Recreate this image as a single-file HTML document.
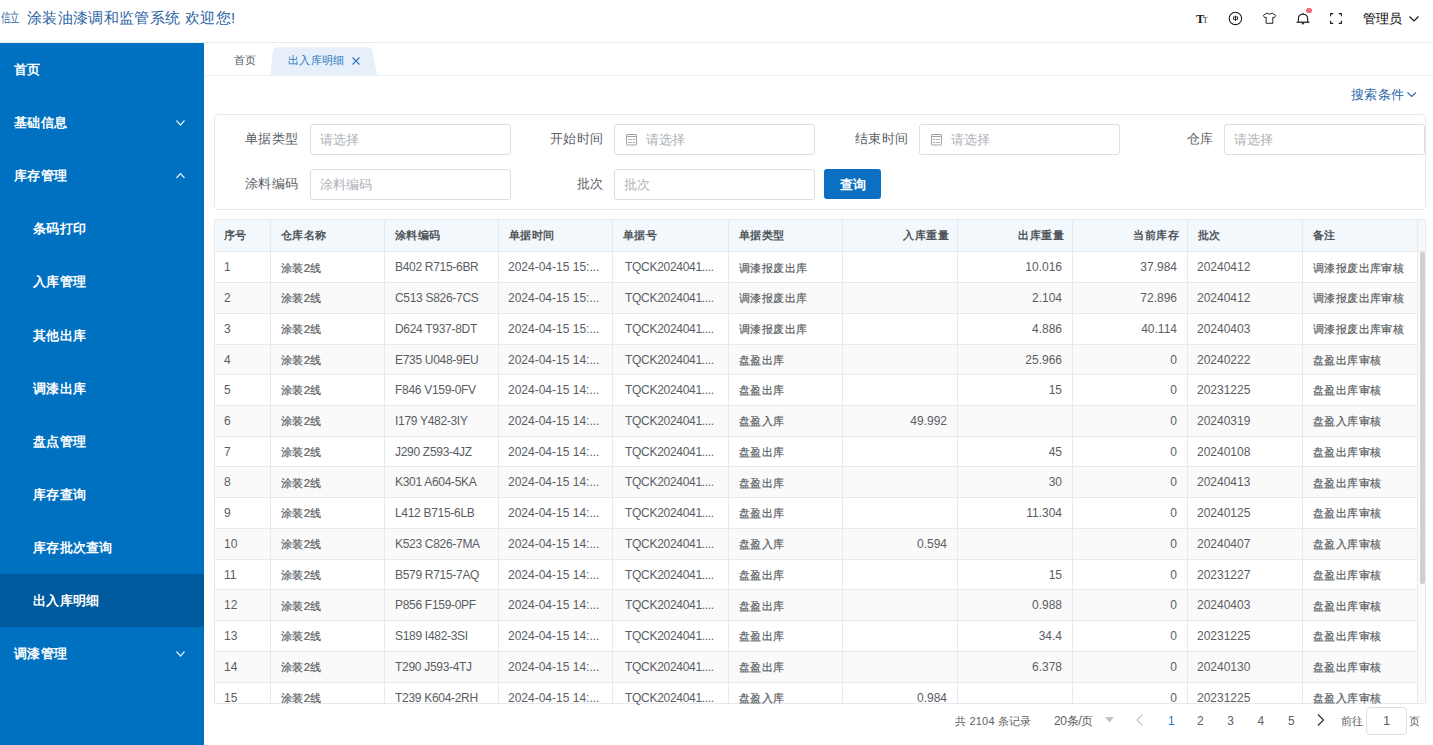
<!DOCTYPE html><html><head><meta charset="utf-8"><title>出入库明细</title><style>
*{box-sizing:border-box}
html,body{margin:0;padding:0;width:1433px;height:745px;overflow:hidden;background:#fff;
 font-family:"Liberation Sans",sans-serif;}
.abs{position:absolute}
.t{position:absolute;white-space:nowrap}
.mi{position:absolute;left:0;width:204px;color:#fff;font-size:13px;font-weight:bold;letter-spacing:0.28px;line-height:20px;white-space:nowrap}
.lbl{position:absolute;font-size:13px;letter-spacing:0.25px;color:#5a5e66;white-space:nowrap;line-height:16px}
.inp{position:absolute;height:31px;width:201px;border:1px solid #dadde2;border-radius:3px;background:#fff;font-size:13px;line-height:29px;color:#aeb1b7;white-space:nowrap}
.c{position:absolute;font-size:12px;white-space:nowrap;line-height:16px;color:#5a5e63}
.cz{font-size:12px;transform:scale(0.95);transform-origin:0 0;-webkit-text-stroke:0.2px #5a5e63}
.cc{letter-spacing:-0.3px}
.h{position:absolute;font-size:11px;font-weight:bold;letter-spacing:0.4px;white-space:nowrap;line-height:16px;color:#50555b}
.pg{position:absolute;font-size:11px;color:#606266;white-space:nowrap;line-height:16px}
</style></head><body>
<div class="abs" style="left:0;top:0;width:1433px;height:43px;background:#fff;border-bottom:1px solid #e9ecf0"></div>
<div class="t" style="left:1px;top:10px;font-size:13px;line-height:16px;color:#2a62a4;transform:scaleX(0.72);transform-origin:0 0">信立</div>
<div class="t" style="left:27px;top:9px;font-size:15px;letter-spacing:0.35px;line-height:18px;color:#2a62a4">涂装油漆调和监管系统 欢迎您!</div>
<div class="t" style="left:1196px;top:11px;font-family:'Liberation Serif',serif;font-weight:bold;font-size:12.5px;line-height:16px;color:#1a1a1a">T</div>
<div class="t" style="left:1203px;top:15.5px;font-family:'Liberation Serif',serif;font-size:7.5px;line-height:10px;color:#1a1a1a">T</div>
<svg class="abs" style="left:1228px;top:11px" width="15" height="15"><circle cx="7.4" cy="7.4" r="6.2" fill="none" stroke="#1a1a1a" stroke-width="1.05"/><rect x="5.4" y="6" width="4.2" height="2.3" fill="none" stroke="#1a1a1a" stroke-width="0.8"/><path d="M7.5 4.6 V10.2" stroke="#1a1a1a" stroke-width="0.9"/></svg>
<svg class="abs" style="left:1262px;top:12px" width="15" height="13"><path d="M4.9 1.1 L1.6 3.1 Q1.2 3.4 1.5 3.9 L3 5.9 L4.2 5.3 L4.2 11.3 L10.8 11.3 L10.8 5.3 L12 5.9 L13.5 3.9 Q13.8 3.4 13.4 3.1 L10.1 1.1 Q7.5 3.3 4.9 1.1 Z" fill="none" stroke="#1a1a1a" stroke-width="0.95" stroke-linejoin="round"/></svg>
<svg class="abs" style="left:1296px;top:12px" width="14" height="13"><path d="M2.4 9.8 L2.4 6.6 Q2.4 2.2 7 2.2 Q11.6 2.2 11.6 6.6 L11.6 9.8" fill="none" stroke="#1a1a1a" stroke-width="1.1"/><path d="M0.6 10.2 H13.4" stroke="#1a1a1a" stroke-width="1.3"/><path d="M5.8 11.7 H8.2" stroke="#1a1a1a" stroke-width="1.2"/><path d="M7 0.8 V2.2" stroke="#1a1a1a" stroke-width="1"/></svg>
<div class="abs" style="left:1306px;top:7.7px;width:5.6px;height:5.6px;border-radius:50%;background:#f06873"></div>
<svg class="abs" style="left:1330px;top:13px" width="12" height="11"><path d="M0.6 3.2 V0.6 H3.2 M8.8 0.6 H11.4 V3.2 M11.4 7.8 V10.4 H8.8 M3.2 10.4 H0.6 V7.8" fill="none" stroke="#1a1a1a" stroke-width="1.1"/></svg>
<div class="t" style="left:1363px;top:9.5px;font-size:13px;line-height:18px;color:#000">管理员</div>
<svg class="abs" style="left:1409px;top:16px" width="10" height="5.5"><path d="M0.5 0.5 L5.0 5.0 L9.5 0.5" fill="none" stroke="#1a1a1a" stroke-width="1.2"/></svg>
<div class="abs" style="left:0;top:43px;width:204px;height:702px;background:#0070c0"></div>
<div class="mi" style="left:14px;top:60.00px">首页</div>
<div class="mi" style="left:14px;top:113.10px">基础信息</div>
<svg class="abs" style="left:175.5px;top:120px" width="9" height="5.5"><path d="M0.5 0.5 L4.5 5.0 L8.5 0.5" fill="none" stroke="#dcecf9" stroke-width="1.2"/></svg>
<div class="mi" style="left:14px;top:166.20px">库存管理</div>
<svg class="abs" style="left:175.5px;top:173px" width="9" height="5.5"><path d="M0.5 5.0 L4.5 0.5 L8.5 5.0" fill="none" stroke="#dcecf9" stroke-width="1.2"/></svg>
<div class="mi" style="left:33px;top:219.30px">条码打印</div>
<div class="mi" style="left:33px;top:272.40px">入库管理</div>
<div class="mi" style="left:33px;top:325.50px">其他出库</div>
<div class="mi" style="left:33px;top:378.60px">调漆出库</div>
<div class="mi" style="left:33px;top:431.70px">盘点管理</div>
<div class="mi" style="left:33px;top:484.80px">库存查询</div>
<div class="mi" style="left:33px;top:537.90px">库存批次查询</div>
<div class="abs" style="left:0;top:574.00px;width:204px;height:53.10px;background:#005a9e"></div>
<div class="mi" style="left:33px;top:591.00px">出入库明细</div>
<div class="mi" style="left:14px;top:644.10px">调漆管理</div>
<svg class="abs" style="left:175.5px;top:651px" width="9" height="5.5"><path d="M0.5 0.5 L4.5 5.0 L8.5 0.5" fill="none" stroke="#dcecf9" stroke-width="1.2"/></svg>
<div class="abs" style="left:204px;top:43px;width:1229px;height:33px;border-bottom:1px solid #eef0f3"></div>
<div class="t" style="left:234px;top:52px;font-size:11px;line-height:16px;color:#555a60">首页</div>
<svg class="abs" style="left:266px;top:47px" width="116" height="28"><path d="M4.2 28 L6.6 5.5 Q7.2 0.3 12.5 0.3 L100.5 0.3 Q106 0.3 106.8 5.5 L111 28 Z" fill="#e7f0fa"/></svg>
<div class="t" style="left:288px;top:52px;font-size:11px;letter-spacing:0.35px;line-height:16px;color:#2c77c0">出入库明细</div>
<svg class="abs" style="left:351px;top:56px" width="10" height="10"><path d="M1.5 1.5 L8.5 8.5 M8.5 1.5 L1.5 8.5" stroke="#2c77c0" stroke-width="1.1"/></svg>
<div class="t" style="left:1351px;top:87px;font-size:13px;letter-spacing:0.25px;line-height:16px;color:#2a66a8">搜索条件</div>
<svg class="abs" style="left:1407px;top:92px" width="9.5" height="5"><path d="M0.5 0.5 L4.75 4.5 L9.0 0.5" fill="none" stroke="#2a66a8" stroke-width="1.05"/></svg>
<div class="abs" style="left:214px;top:114px;width:1212px;height:96px;border:1px solid #e6e9ee;border-radius:4px"></div>
<div class="lbl" style="right:1135px;top:131px">单据类型</div>
<div class="inp" style="left:310px;top:124px;padding-left:9px">请选择</div>
<div class="lbl" style="right:830px;top:131px">开始时间</div>
<div class="inp" style="left:614px;top:124px;padding-left:31px">请选择</div>
<svg class="abs" style="left:626px;top:134px" width="12" height="12"><rect x="0.5" y="0.5" width="10" height="10.5" rx="0.5" fill="none" stroke="#a0a3a9" stroke-width="1"/><path d="M0.5 2.5 H10.5" stroke="#a0a3a9" stroke-width="1"/><path d="M2 5.5h2M4.5 5.5h2M7 5.5h2M2 8.5h2M4.5 8.5h2M7 8.5h2" stroke="#a8abb0" stroke-width="1"/></svg>
<div class="lbl" style="right:525px;top:131px">结束时间</div>
<div class="inp" style="left:919px;top:124px;padding-left:31px">请选择</div>
<svg class="abs" style="left:931px;top:134px" width="12" height="12"><rect x="0.5" y="0.5" width="10" height="10.5" rx="0.5" fill="none" stroke="#a0a3a9" stroke-width="1"/><path d="M0.5 2.5 H10.5" stroke="#a0a3a9" stroke-width="1"/><path d="M2 5.5h2M4.5 5.5h2M7 5.5h2M2 8.5h2M4.5 8.5h2M7 8.5h2" stroke="#a8abb0" stroke-width="1"/></svg>
<div class="lbl" style="right:220px;top:131px">仓库</div>
<div class="inp" style="left:1224px;top:124px;padding-left:9px">请选择</div>
<div class="lbl" style="right:1135px;top:176px">涂料编码</div>
<div class="inp" style="left:310px;top:169px;padding-left:9px">涂料编码</div>
<div class="lbl" style="right:830px;top:176px">批次</div>
<div class="inp" style="left:614px;top:169px;padding-left:9px">批次</div>
<div class="abs" style="left:824px;top:169px;width:57px;height:30px;border-radius:3px;background:#0b70c2;color:#fff;font-size:13px;font-weight:bold;line-height:30px;padding-top:1px;text-align:center">查询</div>
<div class="abs" style="left:214px;top:219px;width:1212px;height:485px;border:1px solid #e7e9ec;background:#fff"></div>
<div class="abs" style="left:215px;top:220px;width:1210px;height:31px;background:#f3f8fc"></div>
<div class="abs" style="left:215px;top:251px;width:1210px;height:1px;background:#e7e9ec"></div>
<div class="abs" style="left:215px;top:252.30px;width:1202px;height:29.74px;background:#fff"></div>
<div class="abs" style="left:215px;top:282.04px;width:1202px;height:1px;background:#e7e9ec"></div>
<div class="abs" style="left:215px;top:283.04px;width:1202px;height:29.74px;background:#fafafa"></div>
<div class="abs" style="left:215px;top:312.78px;width:1202px;height:1px;background:#e7e9ec"></div>
<div class="abs" style="left:215px;top:313.78px;width:1202px;height:29.74px;background:#fff"></div>
<div class="abs" style="left:215px;top:343.52px;width:1202px;height:1px;background:#e7e9ec"></div>
<div class="abs" style="left:215px;top:344.52px;width:1202px;height:29.74px;background:#fafafa"></div>
<div class="abs" style="left:215px;top:374.26px;width:1202px;height:1px;background:#e7e9ec"></div>
<div class="abs" style="left:215px;top:375.26px;width:1202px;height:29.74px;background:#fff"></div>
<div class="abs" style="left:215px;top:405.00px;width:1202px;height:1px;background:#e7e9ec"></div>
<div class="abs" style="left:215px;top:406.00px;width:1202px;height:29.74px;background:#fafafa"></div>
<div class="abs" style="left:215px;top:435.74px;width:1202px;height:1px;background:#e7e9ec"></div>
<div class="abs" style="left:215px;top:436.74px;width:1202px;height:29.74px;background:#fff"></div>
<div class="abs" style="left:215px;top:466.48px;width:1202px;height:1px;background:#e7e9ec"></div>
<div class="abs" style="left:215px;top:467.48px;width:1202px;height:29.74px;background:#fafafa"></div>
<div class="abs" style="left:215px;top:497.22px;width:1202px;height:1px;background:#e7e9ec"></div>
<div class="abs" style="left:215px;top:498.22px;width:1202px;height:29.74px;background:#fff"></div>
<div class="abs" style="left:215px;top:527.96px;width:1202px;height:1px;background:#e7e9ec"></div>
<div class="abs" style="left:215px;top:528.96px;width:1202px;height:29.74px;background:#fafafa"></div>
<div class="abs" style="left:215px;top:558.70px;width:1202px;height:1px;background:#e7e9ec"></div>
<div class="abs" style="left:215px;top:559.70px;width:1202px;height:29.74px;background:#fff"></div>
<div class="abs" style="left:215px;top:589.44px;width:1202px;height:1px;background:#e7e9ec"></div>
<div class="abs" style="left:215px;top:590.44px;width:1202px;height:29.74px;background:#fafafa"></div>
<div class="abs" style="left:215px;top:620.18px;width:1202px;height:1px;background:#e7e9ec"></div>
<div class="abs" style="left:215px;top:621.18px;width:1202px;height:29.74px;background:#fff"></div>
<div class="abs" style="left:215px;top:650.92px;width:1202px;height:1px;background:#e7e9ec"></div>
<div class="abs" style="left:215px;top:651.92px;width:1202px;height:29.74px;background:#fafafa"></div>
<div class="abs" style="left:215px;top:681.66px;width:1202px;height:1px;background:#e7e9ec"></div>
<div class="abs" style="left:215px;top:682.66px;width:1202px;height:20.34px;background:#fff"></div>
<div class="abs" style="left:270px;top:220px;width:1px;height:483px;background:#e7e9ec"></div>
<div class="abs" style="left:384px;top:220px;width:1px;height:483px;background:#e7e9ec"></div>
<div class="abs" style="left:498px;top:220px;width:1px;height:483px;background:#e7e9ec"></div>
<div class="abs" style="left:612px;top:220px;width:1px;height:483px;background:#e7e9ec"></div>
<div class="abs" style="left:728px;top:220px;width:1px;height:483px;background:#e7e9ec"></div>
<div class="abs" style="left:842px;top:220px;width:1px;height:483px;background:#e7e9ec"></div>
<div class="abs" style="left:957px;top:220px;width:1px;height:483px;background:#e7e9ec"></div>
<div class="abs" style="left:1072px;top:220px;width:1px;height:483px;background:#e7e9ec"></div>
<div class="abs" style="left:1187px;top:220px;width:1px;height:483px;background:#e7e9ec"></div>
<div class="abs" style="left:1302px;top:220px;width:1px;height:483px;background:#e7e9ec"></div>
<div class="abs" style="left:1417px;top:220px;width:1px;height:483px;background:#e7e9ec"></div>
<div class="h" style="left:224px;top:227px">序号</div>
<div class="h" style="left:281px;top:227px">仓库名称</div>
<div class="h" style="left:395px;top:227px">涂料编码</div>
<div class="h" style="left:509px;top:227px">单据时间</div>
<div class="h" style="left:623px;top:227px">单据号</div>
<div class="h" style="left:739px;top:227px">单据类型</div>
<div class="h" style="right:484px;top:227px">入库重量</div>
<div class="h" style="right:369px;top:227px">出库重量</div>
<div class="h" style="right:254px;top:227px">当前库存</div>
<div class="h" style="left:1198px;top:227px">批次</div>
<div class="h" style="left:1313px;top:227px">备注</div>
<div class="c" style="left:224px;top:259.30px">1</div>
<div class="c cz" style="left:281px;top:260.50px">涂装2线</div>
<div class="c cc" style="left:395px;top:259.30px">B402 R715-6BR</div>
<div class="c" style="left:508px;top:259.30px">2024-04-15 15:...</div>
<div class="c cc" style="left:625px;top:259.30px">TQCK2024041....</div>
<div class="c cz" style="left:739px;top:260.50px">调漆报废出库</div>
<div class="c" style="right:371px;top:259.30px">10.016</div>
<div class="c" style="right:256px;top:259.30px">37.984</div>
<div class="c" style="left:1197px;top:259.30px">20240412</div>
<div class="c cz" style="left:1313px;top:260.50px">调漆报废出库审核</div>
<div class="c" style="left:224px;top:290.04px">2</div>
<div class="c cz" style="left:281px;top:291.24px">涂装2线</div>
<div class="c cc" style="left:395px;top:290.04px">C513 S826-7CS</div>
<div class="c" style="left:508px;top:290.04px">2024-04-15 15:...</div>
<div class="c cc" style="left:625px;top:290.04px">TQCK2024041....</div>
<div class="c cz" style="left:739px;top:291.24px">调漆报废出库</div>
<div class="c" style="right:371px;top:290.04px">2.104</div>
<div class="c" style="right:256px;top:290.04px">72.896</div>
<div class="c" style="left:1197px;top:290.04px">20240412</div>
<div class="c cz" style="left:1313px;top:291.24px">调漆报废出库审核</div>
<div class="c" style="left:224px;top:320.78px">3</div>
<div class="c cz" style="left:281px;top:321.98px">涂装2线</div>
<div class="c cc" style="left:395px;top:320.78px">D624 T937-8DT</div>
<div class="c" style="left:508px;top:320.78px">2024-04-15 15:...</div>
<div class="c cc" style="left:625px;top:320.78px">TQCK2024041....</div>
<div class="c cz" style="left:739px;top:321.98px">调漆报废出库</div>
<div class="c" style="right:371px;top:320.78px">4.886</div>
<div class="c" style="right:256px;top:320.78px">40.114</div>
<div class="c" style="left:1197px;top:320.78px">20240403</div>
<div class="c cz" style="left:1313px;top:321.98px">调漆报废出库审核</div>
<div class="c" style="left:224px;top:351.52px">4</div>
<div class="c cz" style="left:281px;top:352.72px">涂装2线</div>
<div class="c cc" style="left:395px;top:351.52px">E735 U048-9EU</div>
<div class="c" style="left:508px;top:351.52px">2024-04-15 14:...</div>
<div class="c cc" style="left:625px;top:351.52px">TQCK2024041....</div>
<div class="c cz" style="left:739px;top:352.72px">盘盈出库</div>
<div class="c" style="right:371px;top:351.52px">25.966</div>
<div class="c" style="right:256px;top:351.52px">0</div>
<div class="c" style="left:1197px;top:351.52px">20240222</div>
<div class="c cz" style="left:1313px;top:352.72px">盘盈出库审核</div>
<div class="c" style="left:224px;top:382.26px">5</div>
<div class="c cz" style="left:281px;top:383.46px">涂装2线</div>
<div class="c cc" style="left:395px;top:382.26px">F846 V159-0FV</div>
<div class="c" style="left:508px;top:382.26px">2024-04-15 14:...</div>
<div class="c cc" style="left:625px;top:382.26px">TQCK2024041....</div>
<div class="c cz" style="left:739px;top:383.46px">盘盈出库</div>
<div class="c" style="right:371px;top:382.26px">15</div>
<div class="c" style="right:256px;top:382.26px">0</div>
<div class="c" style="left:1197px;top:382.26px">20231225</div>
<div class="c cz" style="left:1313px;top:383.46px">盘盈出库审核</div>
<div class="c" style="left:224px;top:413.00px">6</div>
<div class="c cz" style="left:281px;top:414.20px">涂装2线</div>
<div class="c cc" style="left:395px;top:413.00px">I179 Y482-3IY</div>
<div class="c" style="left:508px;top:413.00px">2024-04-15 14:...</div>
<div class="c cc" style="left:625px;top:413.00px">TQCK2024041....</div>
<div class="c cz" style="left:739px;top:414.20px">盘盈入库</div>
<div class="c" style="right:486px;top:413.00px">49.992</div>
<div class="c" style="right:256px;top:413.00px">0</div>
<div class="c" style="left:1197px;top:413.00px">20240319</div>
<div class="c cz" style="left:1313px;top:414.20px">盘盈入库审核</div>
<div class="c" style="left:224px;top:443.74px">7</div>
<div class="c cz" style="left:281px;top:444.94px">涂装2线</div>
<div class="c cc" style="left:395px;top:443.74px">J290 Z593-4JZ</div>
<div class="c" style="left:508px;top:443.74px">2024-04-15 14:...</div>
<div class="c cc" style="left:625px;top:443.74px">TQCK2024041....</div>
<div class="c cz" style="left:739px;top:444.94px">盘盈出库</div>
<div class="c" style="right:371px;top:443.74px">45</div>
<div class="c" style="right:256px;top:443.74px">0</div>
<div class="c" style="left:1197px;top:443.74px">20240108</div>
<div class="c cz" style="left:1313px;top:444.94px">盘盈出库审核</div>
<div class="c" style="left:224px;top:474.48px">8</div>
<div class="c cz" style="left:281px;top:475.68px">涂装2线</div>
<div class="c cc" style="left:395px;top:474.48px">K301 A604-5KA</div>
<div class="c" style="left:508px;top:474.48px">2024-04-15 14:...</div>
<div class="c cc" style="left:625px;top:474.48px">TQCK2024041....</div>
<div class="c cz" style="left:739px;top:475.68px">盘盈出库</div>
<div class="c" style="right:371px;top:474.48px">30</div>
<div class="c" style="right:256px;top:474.48px">0</div>
<div class="c" style="left:1197px;top:474.48px">20240413</div>
<div class="c cz" style="left:1313px;top:475.68px">盘盈出库审核</div>
<div class="c" style="left:224px;top:505.22px">9</div>
<div class="c cz" style="left:281px;top:506.42px">涂装2线</div>
<div class="c cc" style="left:395px;top:505.22px">L412 B715-6LB</div>
<div class="c" style="left:508px;top:505.22px">2024-04-15 14:...</div>
<div class="c cc" style="left:625px;top:505.22px">TQCK2024041....</div>
<div class="c cz" style="left:739px;top:506.42px">盘盈出库</div>
<div class="c" style="right:371px;top:505.22px">11.304</div>
<div class="c" style="right:256px;top:505.22px">0</div>
<div class="c" style="left:1197px;top:505.22px">20240125</div>
<div class="c cz" style="left:1313px;top:506.42px">盘盈出库审核</div>
<div class="c" style="left:224px;top:535.96px">10</div>
<div class="c cz" style="left:281px;top:537.16px">涂装2线</div>
<div class="c cc" style="left:395px;top:535.96px">K523 C826-7MA</div>
<div class="c" style="left:508px;top:535.96px">2024-04-15 14:...</div>
<div class="c cc" style="left:625px;top:535.96px">TQCK2024041....</div>
<div class="c cz" style="left:739px;top:537.16px">盘盈入库</div>
<div class="c" style="right:486px;top:535.96px">0.594</div>
<div class="c" style="right:256px;top:535.96px">0</div>
<div class="c" style="left:1197px;top:535.96px">20240407</div>
<div class="c cz" style="left:1313px;top:537.16px">盘盈入库审核</div>
<div class="c" style="left:224px;top:566.70px">11</div>
<div class="c cz" style="left:281px;top:567.90px">涂装2线</div>
<div class="c cc" style="left:395px;top:566.70px">B579 R715-7AQ</div>
<div class="c" style="left:508px;top:566.70px">2024-04-15 14:...</div>
<div class="c cc" style="left:625px;top:566.70px">TQCK2024041....</div>
<div class="c cz" style="left:739px;top:567.90px">盘盈出库</div>
<div class="c" style="right:371px;top:566.70px">15</div>
<div class="c" style="right:256px;top:566.70px">0</div>
<div class="c" style="left:1197px;top:566.70px">20231227</div>
<div class="c cz" style="left:1313px;top:567.90px">盘盈出库审核</div>
<div class="c" style="left:224px;top:597.44px">12</div>
<div class="c cz" style="left:281px;top:598.64px">涂装2线</div>
<div class="c cc" style="left:395px;top:597.44px">P856 F159-0PF</div>
<div class="c" style="left:508px;top:597.44px">2024-04-15 14:...</div>
<div class="c cc" style="left:625px;top:597.44px">TQCK2024041....</div>
<div class="c cz" style="left:739px;top:598.64px">盘盈出库</div>
<div class="c" style="right:371px;top:597.44px">0.988</div>
<div class="c" style="right:256px;top:597.44px">0</div>
<div class="c" style="left:1197px;top:597.44px">20240403</div>
<div class="c cz" style="left:1313px;top:598.64px">盘盈出库审核</div>
<div class="c" style="left:224px;top:628.18px">13</div>
<div class="c cz" style="left:281px;top:629.38px">涂装2线</div>
<div class="c cc" style="left:395px;top:628.18px">S189 I482-3SI</div>
<div class="c" style="left:508px;top:628.18px">2024-04-15 14:...</div>
<div class="c cc" style="left:625px;top:628.18px">TQCK2024041....</div>
<div class="c cz" style="left:739px;top:629.38px">盘盈出库</div>
<div class="c" style="right:371px;top:628.18px">34.4</div>
<div class="c" style="right:256px;top:628.18px">0</div>
<div class="c" style="left:1197px;top:628.18px">20231225</div>
<div class="c cz" style="left:1313px;top:629.38px">盘盈出库审核</div>
<div class="c" style="left:224px;top:658.92px">14</div>
<div class="c cz" style="left:281px;top:660.12px">涂装2线</div>
<div class="c cc" style="left:395px;top:658.92px">T290 J593-4TJ</div>
<div class="c" style="left:508px;top:658.92px">2024-04-15 14:...</div>
<div class="c cc" style="left:625px;top:658.92px">TQCK2024041....</div>
<div class="c cz" style="left:739px;top:660.12px">盘盈出库</div>
<div class="c" style="right:371px;top:658.92px">6.378</div>
<div class="c" style="right:256px;top:658.92px">0</div>
<div class="c" style="left:1197px;top:658.92px">20240130</div>
<div class="c cz" style="left:1313px;top:660.12px">盘盈出库审核</div>
<div class="c" style="left:224px;top:689.66px">15</div>
<div class="c cz" style="left:281px;top:690.86px">涂装2线</div>
<div class="c cc" style="left:395px;top:689.66px">T239 K604-2RH</div>
<div class="c" style="left:508px;top:689.66px">2024-04-15 14:...</div>
<div class="c cc" style="left:625px;top:689.66px">TQCK2024041....</div>
<div class="c cz" style="left:739px;top:690.86px">盘盈入库</div>
<div class="c" style="right:486px;top:689.66px">0.984</div>
<div class="c" style="right:256px;top:689.66px">0</div>
<div class="c" style="left:1197px;top:689.66px">20231225</div>
<div class="c cz" style="left:1313px;top:690.86px">盘盈入库审核</div>
<div class="abs" style="left:1418px;top:220px;width:7px;height:31px;background:#f6f7f8"></div>
<div class="abs" style="left:1418px;top:252px;width:7px;height:451px;background:#fcfcfc"></div>
<div class="abs" style="left:1420px;top:252px;width:5px;height:332px;border-radius:2px;background:#d0d0d0"></div>
<div class="pg" style="left:955px;top:713px;letter-spacing:0.2px">共 2104 条记录</div>
<div class="pg" style="left:1054px;top:713px;font-size:12px;letter-spacing:-0.35px">20条/页</div>
<svg class="abs" style="left:1105px;top:717px" width="9" height="6"><path d="M0 0 H9 L4.5 5.5 Z" fill="#c0c4cc"/></svg>
<svg class="abs" style="left:1136px;top:714px" width="8" height="12"><path d="M6.5 0.5 L1 6 L6.5 11.5" fill="none" stroke="#c0c4cc" stroke-width="1.2"/></svg>
<div class="pg" style="left:1168px;top:713px;font-size:12px;color:#2a7ac8">1</div>
<div class="pg" style="left:1197.0px;top:713px;font-size:12px">2</div>
<div class="pg" style="left:1227.3px;top:713px;font-size:12px">3</div>
<div class="pg" style="left:1257.6px;top:713px;font-size:12px">4</div>
<div class="pg" style="left:1287.9px;top:713px;font-size:12px">5</div>
<svg class="abs" style="left:1317px;top:714px" width="8" height="12"><path d="M1 0.5 L6.5 6 L1 11.5" fill="none" stroke="#303133" stroke-width="1.2"/></svg>
<div class="pg" style="left:1341px;top:713px">前往</div>
<div class="abs" style="left:1366px;top:707px;width:41px;height:28px;border:1px solid #dcdfe6;border-radius:4px;font-size:13px;line-height:26px;text-align:center;color:#606266">1</div>
<div class="pg" style="left:1409px;top:713px">页</div>
</body></html>
